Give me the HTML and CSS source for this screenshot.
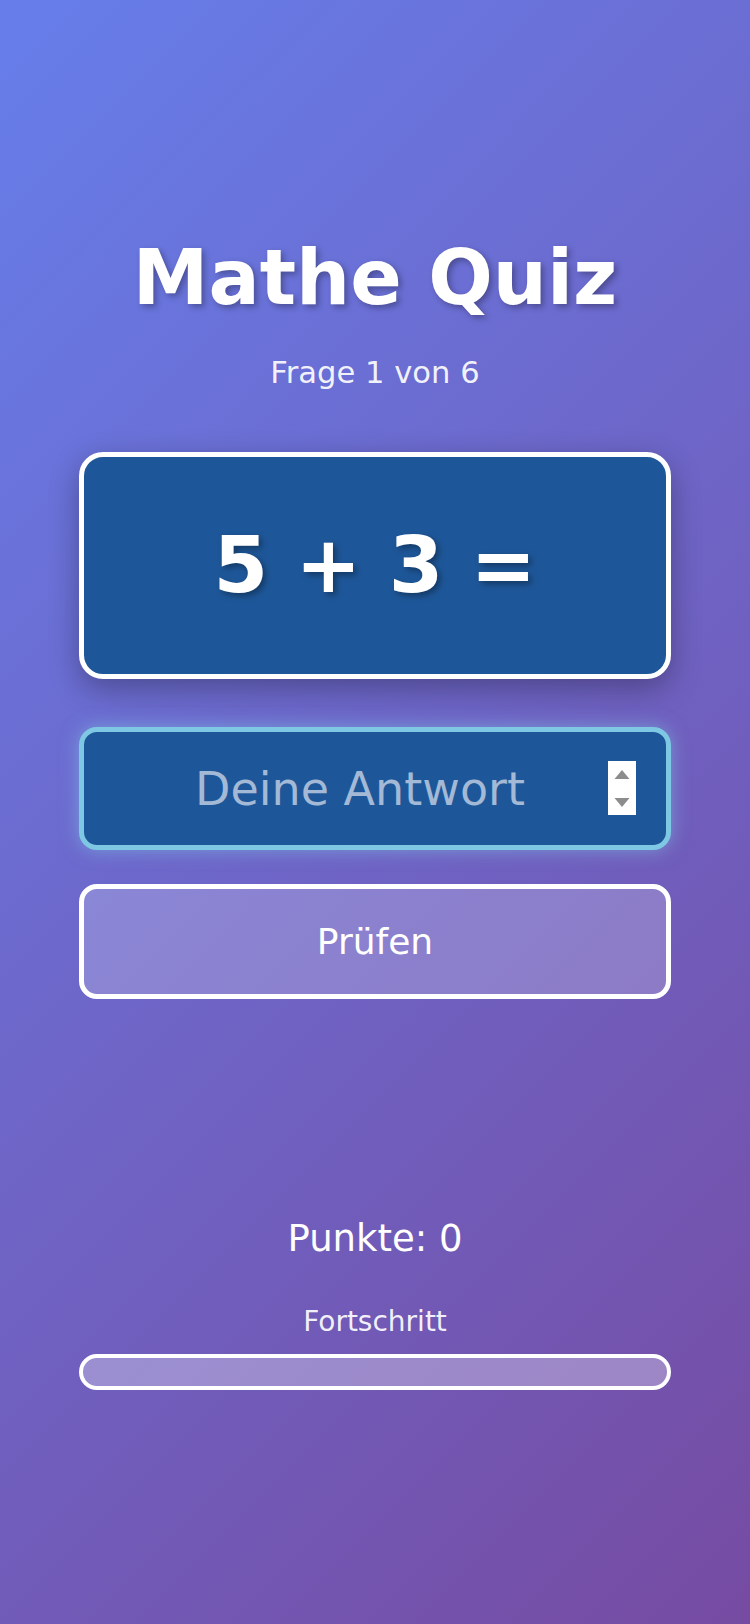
FILE: index.html
```html
<!DOCTYPE html>
<html lang="de">
<head>
<meta charset="utf-8">
<title>Mathe Quiz</title>
<link rel="stylesheet" href="styles.css">
</head>
<body>
<main class="quiz">
  <h1 class="title">Mathe Quiz</h1>
  <p class="subtitle">Frage 1 von 6</p>
  <div class="question-card">
    <span class="question">5 + 3 =</span>
  </div>
  <div class="answer-wrap">
    <input class="answer" type="number" placeholder="Deine Antwort" autofocus>
    <div class="spinner" aria-hidden="true">
      <svg width="28" height="54" viewBox="0 0 28 54">
        <polygon points="6.5,18 14,9 21.5,18" fill="#8c8c8c"/>
        <polygon points="6.5,37 21.5,37 14,46" fill="#8c8c8c"/>
      </svg>
    </div>
  </div>
  <button class="check" type="button">Prüfen</button>
  <p class="score">Punkte: 0</p>
  <p class="progress-label">Fortschritt</p>
  <div class="progress"><div class="progress-fill" style="width:0%"></div></div>
</main>
</body>
</html>
```
FILE: styles.css
```css
html, body {
  margin: 0;
  padding: 0;
}
body {
  width: 750px;
  min-height: 1624px;
  background: linear-gradient(135deg, #667eea 0%, #764ba2 100%);
  font-family: "DejaVu Sans", "Liberation Sans", sans-serif;
  color: #fff;
}
.quiz {
  display: flex;
  flex-direction: column;
  padding: 230px 79px 0;
  box-sizing: border-box;
}
.title {
  margin: 0;
  font-size: 76px;
  line-height: 96px;
  font-weight: bold;
  text-align: center;
  text-shadow: 3px 3px 6px rgba(0, 0, 0, 0.3);
}
.subtitle {
  margin: 29px 0 0;
  font-size: 30.6px;
  line-height: 36px;
  text-align: center;
  color: rgba(255, 255, 255, 0.92);
}
.question-card {
  margin-top: 61px;
  height: 227px;
  box-sizing: border-box;
  background: #1e5799;
  border: 5px solid #fff;
  border-radius: 24px;
  box-shadow: 0 10px 30px rgba(0, 0, 0, 0.3);
  display: flex;
  align-items: center;
  justify-content: center;
}
.question {
  font-size: 78.5px;
  font-weight: bold;
  line-height: 1;
  text-shadow: 3px 3px 6px rgba(0, 0, 0, 0.35);
}
.answer-wrap {
  position: relative;
  margin-top: 48px;
  height: 123px;
}
.answer {
  display: block;
  height: 123px;
  box-sizing: border-box;
  width: 100%;
  background: #1e5799;
  border: 5px solid #7ec8e3;
  border-radius: 18px;
  box-shadow: 0 0 18px rgba(126, 200, 227, 0.55);
  color: #fff;
  font-family: "DejaVu Sans", "Liberation Sans", sans-serif;
  font-size: 46px;
  text-align: center;
  padding: 0 60px 0 30px;
  outline: none;
  -moz-appearance: textfield;
}
.answer::placeholder {
  color: #a3b9d6;
}
.answer::-webkit-inner-spin-button,
.answer::-webkit-outer-spin-button {
  -webkit-appearance: none;
  margin: 0;
}
.spinner {
  position: absolute;
  top: 34px;
  right: 35px;
  width: 28px;
  height: 54px;
  background: #fff;
  display: flex;
}
.check {
  margin-top: 34px;
  height: 115px;
  width: 100%;
  box-sizing: border-box;
  background: rgba(255, 255, 255, 0.2);
  border: 5px solid #fff;
  border-radius: 18px;
  color: #fff;
  font-family: "DejaVu Sans", "Liberation Sans", sans-serif;
  font-size: 36px;
  cursor: pointer;
}
.score {
  margin: 218px 0 0;
  font-size: 37px;
  line-height: 44px;
  text-align: center;
}
.progress-label {
  margin: 44px 0 0;
  font-size: 28px;
  line-height: 34px;
  text-align: center;
  color: rgba(255, 255, 255, 0.92);
}
.progress {
  margin-top: 15px;
  height: 36px;
  box-sizing: border-box;
  border: 4px solid #fff;
  border-radius: 18px;
  background: rgba(255, 255, 255, 0.3);
  overflow: hidden;
}
.progress-fill {
  height: 100%;
  background: #7ec8e3;
}
```
